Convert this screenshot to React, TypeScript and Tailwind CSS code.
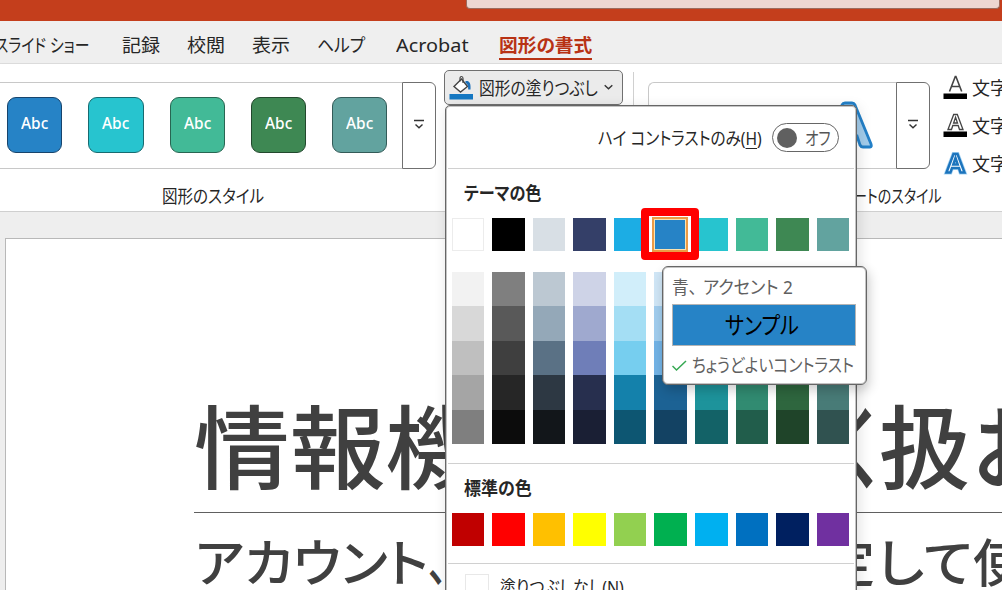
import React, { useLayoutEffect, useRef, useState } from "react";

const THEME = ["#ffffff", "#000000", "#d8dfe5", "#343f68", "#1cade4", "#2683c6", "#27c4cf", "#42ba97", "#3e8853", "#62a39f"];
const SHADES = [
  ["#f2f2f2", "#7f7f7f", "#bcc8d2", "#ced3e7", "#d1eefa", "#d0e6f6", "#d3f4f6", "#d9f1ea", "#d5ebdb", "#dfedec"],
  ["#d8d8d8", "#595959", "#94a8b8", "#9fa9cf", "#a4def4", "#a1cdee", "#a7e8ec", "#b3e3d5", "#abd7b7", "#c0dad9"],
  ["#bfbfbf", "#3f3f3f", "#5a7185", "#6f7eb8", "#76ceef", "#72b3e6", "#7cdde3", "#8dd6c0", "#81c393", "#a0c8c5"],
  ["#a5a5a5", "#262626", "#2d3843", "#272f4e", "#1481ab", "#1c6294", "#1d939b", "#318b71", "#2e663e", "#487b77"],
  ["#7f7f7f", "#0c0c0c", "#12161a", "#1a1f34", "#0d5672", "#134263", "#136267", "#215d4b", "#1f4429", "#305250"],
];
const STANDARD = ["#c00000", "#ff0000", "#ffc000", "#ffff00", "#92d050", "#00b050", "#00b0f0", "#0070c0", "#002060", "#7030a0"];
const STYLES = [
  ["#2683c6", "#17446c"],
  ["#27c4cf", "#176b70"],
  ["#42ba97", "#286652"],
  ["#3e8853", "#22482d"],
  ["#62a39f", "#335b58"],
];

/* Nowrap text condensed or widened to an exact advance width. */
function Fit({ w, className = "", children }: { w: number; className?: string; children: React.ReactNode }) {
  const ref = useRef<HTMLSpanElement>(null);
  const [scale, setScale] = useState(1);
  useLayoutEffect(() => {
    if (ref.current) setScale(w / ref.current.offsetWidth);
  }, [w]);
  return (
    <span className={"block shrink-0 whitespace-nowrap " + className} style={{ width: w }}>
      <span ref={ref} className="inline-block origin-left" style={{ transform: `scaleX(${scale})` }}>
        {children}
      </span>
    </span>
  );
}

function MoreButton() {
  return (
    <div className="flex h-[87px] w-[34px] shrink-0 items-center justify-center rounded-r-[6px] border-[1.500px] border-[#707070] bg-white">
      <svg width="12" height="11" viewBox="0 0 12 11" fill="none" stroke="#333" strokeWidth="1.4" className="mb-[2px]">
        <path d="M1 1.500h10M2.500 5.500l3.500 3.300 3.500-3.300" />
      </svg>
    </div>
  );
}

function Swatches({ colors }: { colors: string[] }) {
  return (
    <div className="grid h-full grid-cols-10 gap-x-[8px]">
      {colors.map((c, i) => (
        <div
          key={i}
          className={c === "#ffffff" ? "border border-[#ececec]" : ""}
          style={{ backgroundColor: c }}
        />
      ))}
    </div>
  );
}

function LetterIcon({ kind }: { kind: "fill" | "outline" | "effect" }) {
  return (
    <svg width="25" height="25" viewBox="0 0 25 25" fill="none" className="shrink-0">
      {kind === "effect" ? (
        <>
          <path d="M3.500 21.500L10.500 3h4l7 18.500h-4L16 17H9l-1.600 4.500z" stroke="#a8d4f3" strokeWidth="4" />
          <path d="M3.500 21.500L10.500 3h4l7 18.500h-4L16 17H9l-1.600 4.500zM10.300 13.500h4.400L12.500 7z" fill="#fff" stroke="#1c74bd" strokeWidth="2.500" />
        </>
      ) : (
        <>
          <rect x="0.500" y="18.500" width="23.500" height="5.500" fill="#000" />
          {kind === "fill" ? (
            <path d="M6.500 16.500L12.300 1.500h.600l5.800 15M8.500 11.500h8.200" stroke="#444" strokeWidth="1.600" />
          ) : (
            <path d="M5 16.500L10.700 1.500h3.600l5.700 15h-3.500l-1.300-4H9.800l-1.300 4zM10.600 10h3.900l-1.950-5.700z" stroke="#444" strokeWidth="1.300" />
          )}
        </>
      )}
    </svg>
  );
}

function Ribbon() {
  return (
    <section className="flex h-[148px] shrink-0 border-b border-[#cfcfcf] bg-white shadow-[0_2px_3px_rgba(0,0,0,0.08)]">
      <div className="w-[444px] shrink-0 pt-[18px]">
        <div className="flex h-[87px]">
          <div className="flex w-[402px] gap-[26px] border-y border-[#c8c8c8] pl-[7px] pt-[14px]">
            {STYLES.map(([bg, edge]) => (
              <div
                key={bg}
                className="flex h-[56px] w-[55.300px] shrink-0 items-center justify-center rounded-[9px] border-[1.500px] pb-[5px]"
                style={{ backgroundColor: bg, borderColor: edge }}
              >
                <Fit w={27} className="text-[16px] leading-[20px] font-medium text-white">Abc</Fit>
              </div>
            ))}
          </div>
          <MoreButton />
        </div>
        <div className="pl-[162px] pt-[14px]">
          <Fit w={102} className="text-[18px] leading-[26px]">図形のスタイル</Fit>
        </div>
      </div>
      <div className="w-[178.500px] shrink-0 pt-[6px]">
        <div className="flex h-[35px] items-center rounded-[5px] border-[1.500px] border-[#707070] bg-[#ebebeb] pl-[4px]">
          <svg width="26" height="26" viewBox="0 0 26 26" fill="none" className="shrink-0">
            <path d="M5 11.500L12.500 4l6 7.500-7 5.500z" fill="#fff" stroke="#444" strokeWidth="1.400" />
            <path d="M11 6.500V3.500q0-2 1.500-2t1.500 2v4.500" stroke="#444" strokeWidth="1.200" />
            <path d="M16.500 6c4-.5 5.500 2 5 8.500h-2.300C19.200 10.500 18.500 8.500 16.500 8z" fill="#1c6fb8" />
            <rect x="0.500" y="19" width="23.500" height="5.500" fill="#1678c2" />
          </svg>
          <Fit w={119} className="ml-[4px] text-[18px] leading-[28px]">図形の塗りつぶし</Fit>
          <svg width="9" height="7" viewBox="0 0 9 7" fill="none" stroke="#333" strokeWidth="1.400" className="ml-[6px]">
            <path d="M.7 1.200l3.800 3.600 3.800-3.600" />
          </svg>
        </div>
      </div>
      <div className="mt-[8px] ml-[10px] h-[130px] w-px shrink-0 bg-[#d0d0d0]" />
      <div className="ml-[14px] w-[282px] shrink-0 pt-[18px]">
        <div className="flex h-[87px]">
          <div className="flex w-[248px] items-center justify-end rounded-l-[6px] border border-r-0 border-[#c8c8c8] pr-[21px]">
            <svg width="52" height="50" viewBox="0 0 52 50">
              <path d="M3 45L19 4q1-2 3-2h7q2 0 3 2l16 39q1 3-1 3h-7q-2 0-3-2l-3-9H17l-3 9q-1 2-3 2H4q-2 0-1-3zM21 26h9l-4.500-14z" fill="#a3cdec" stroke="#2380c8" strokeWidth="2.800" />
            </svg>
          </div>
          <MoreButton />
        </div>
        <div className="mr-[-12px] flex justify-end pt-[14px]">
          <Fit w={89} className="text-[18px] leading-[26px]">ートのスタイル</Fit>
        </div>
      </div>
      <div className="flex flex-col gap-[13px] pt-[11px] pl-[13.500px]">
        {(["fill", "outline", "effect"] as const).map((k) => (
          <div key={k} className="flex h-[25px] items-center gap-[4px]">
            <LetterIcon kind={k} />
            <Fit w={36} className="pt-px text-[18px] leading-[27px]">文字</Fit>
          </div>
        ))}
      </div>
    </section>
  );
}

function Slide() {
  return (
    <main className="flex h-[378px] shrink-0 bg-[#eeeeee] pt-[26px] pl-[5px]">
      <div className="h-[352px] w-[997px] overflow-hidden border-t border-l border-[#b8b8b8] bg-white pl-[188px] font-medium text-[#404040]">
        <div className="flex h-[274px] items-end justify-between border-b border-[#606060] pb-[2px]">
          <Fit w={287} className="text-[91px] leading-[126px]">情報機</Fit>
          <div className="flex">
            <Fit w={46} className="text-[91px] leading-[126px]">く</Fit>
            <Fit w={91} className="text-[91px] leading-[126px]">扱</Fit>
            <div className="w-[32px] overflow-hidden pl-[3px]">
              <Fit w={80} className="text-[91px] leading-[126px]">お</Fit>
            </div>
          </div>
        </div>
        <div className="flex h-[76px] justify-between pt-[11px] text-[51px] leading-[76px]">
          <div className="flex pl-px">
            <Fit w={233}>アカウント</Fit>
            <Fit w={20}>、</Fit>
          </div>
          <div className="flex">
            <Fit w={52}>定</Fit>
            <Fit w={47} className="ml-[2px]">し</Fit>
            <Fit w={49}>て</Fit>
            <div className="w-[29px] overflow-hidden"><Fit w={52}>使</Fit></div>
          </div>
        </div>
      </div>
    </main>
  );
}

function ColorMenu() {
  return (
    <div className="absolute top-[105px] left-[444.500px] h-[500px] w-[412px] rounded-t-[5px] border border-[#666] bg-white p-px shadow-[inset_0_0_0_1px_#c4c4c4,2px_3px_14px_rgba(0,0,0,0.13)]">
      <div className="mx-px flex h-[62px] items-center justify-end border-b border-[#d0d0d0] pr-[15px]">
        <Fit w={164} className="text-[18px] leading-[28px]">
          ハイ コントラストのみ(<span className="underline underline-offset-3">H</span>)
        </Fit>
        <div className="ml-[10px] flex h-[29px] w-[67px] items-center rounded-full border-[1.500px] border-[#666] pl-[4px]">
          <div className="size-[20px] shrink-0 rounded-full bg-[#606060]" />
          <Fit w={26} className="ml-[8px] text-[18px] leading-[24px] text-[#555]">オフ</Fit>
        </div>
      </div>
      <div className="h-[294px] px-[5px] pt-[11px]">
        <Fit w={77} className="ml-[12px] text-[18px] leading-[26px] font-bold">テーマの色</Fit>
        <div className="mt-[12px] h-[33px]"><Swatches colors={THEME} /></div>
        <div className="mt-[21px] grid h-[172px] grid-rows-5">
          {SHADES.map((row, i) => <Swatches key={i} colors={row} />)}
        </div>
      </div>
      <div className="mx-px h-[101px] border-y border-[#d0d0d0] px-[4px] pt-[11px]">
        <Fit w={68} className="ml-[12px] text-[18px] leading-[26px] font-bold">標準の色</Fit>
        <div className="mt-[12px] h-[33px]"><Swatches colors={STANDARD} /></div>
      </div>
      <div className="flex h-[26px] overflow-hidden pt-[10px] pl-[18px]">
        <div className="h-[24px] w-[24px] shrink-0 border-[1.500px] border-[#e8e8e8]" />
        <Fit w={124} className="ml-[11px] text-[18px] leading-[26px]">塗りつぶしなし(N)</Fit>
      </div>
    </div>
  );
}

function Tooltip() {
  return (
    <div className="absolute top-[266px] left-[662px] h-[119px] w-[204.500px] rounded-[6px] border border-[#666] bg-white pt-[6px] pl-[9px] text-[#606060] shadow-[inset_0_0_0_1px_#c4c4c4,2px_5px_12px_rgba(0,0,0,0.2)]">
      <div className="flex">
        <Fit w={25} className="text-[18px] leading-[28px]">青、</Fit>
        <Fit w={90} className="ml-[6px] text-[18px] leading-[28px]">アクセント 2</Fit>
      </div>
      <div className="mt-[3px] flex h-[42px] w-[184px] items-center justify-center border border-[#b4b4b4] bg-[#2683c6] pr-[4px] text-black">
        <Fit w={74} className="text-[24px] leading-[34px]">サンプル</Fit>
      </div>
      <div className="mt-[5px] flex items-center">
        <svg width="16" height="13" viewBox="0 0 16 13" fill="none" stroke="#35a852" strokeWidth="1.500">
          <path d="M.5 7l4 4L14 2" />
        </svg>
        <Fit w={162} className="ml-[4px] text-[18px] leading-[28px]">ちょうどよいコントラスト</Fit>
      </div>
    </div>
  );
}

export default function App() {
  return (
    <div className="relative flex h-[590px] w-[1002px] flex-col overflow-hidden bg-[#eeeeee] font-['Noto_Sans','Noto_Sans_CJK_JP',sans-serif] text-[#262626] [font-feature-settings:'palt']">
      <header className="flex h-[21px] shrink-0 justify-end bg-[#c43e1c] pr-[2px]">
        <div className="h-[9px] w-[534px] rounded-b-[4px] border-x border-b border-[#9c6b5e] bg-[#edd6d1]" />
      </header>
      <nav className="flex h-[43px] shrink-0 items-center border-b border-[#dcdcdc] bg-[#efefef] pt-[5px] text-[18.500px] leading-[32px]">
        <Fit w={94} className="ml-[-5px]">スライド ショー</Fit>
        <Fit w={38} className="ml-[33px]">記録</Fit>
        <Fit w={38} className="ml-[26.500px]">校閲</Fit>
        <Fit w={38} className="ml-[27px]">表示</Fit>
        <Fit w={48} className="ml-[27px]">ヘルプ</Fit>
        <Fit w={73} className="ml-[31px]">Acrobat</Fit>
        <div className="ml-[30px] h-[31px] border-b-2 border-[#b83214] leading-[32px]">
          <Fit w={93} className="font-bold text-[#b83214]">図形の書式</Fit>
        </div>
      </nav>
      <Ribbon />
      <Slide />
      <ColorMenu />
      <div className="absolute top-[208px] left-[641px] flex h-[52px] w-[58px] items-center justify-center rounded-[4px] border-8 border-[#ff0000] bg-white">
        <div className="h-[35px] w-[36px] border-2 border-[#ec9b45] bg-[#fbe3b0] p-px">
          <div className="h-full bg-[#2683c6]" />
        </div>
      </div>
      <Tooltip />
    </div>
  );
}
